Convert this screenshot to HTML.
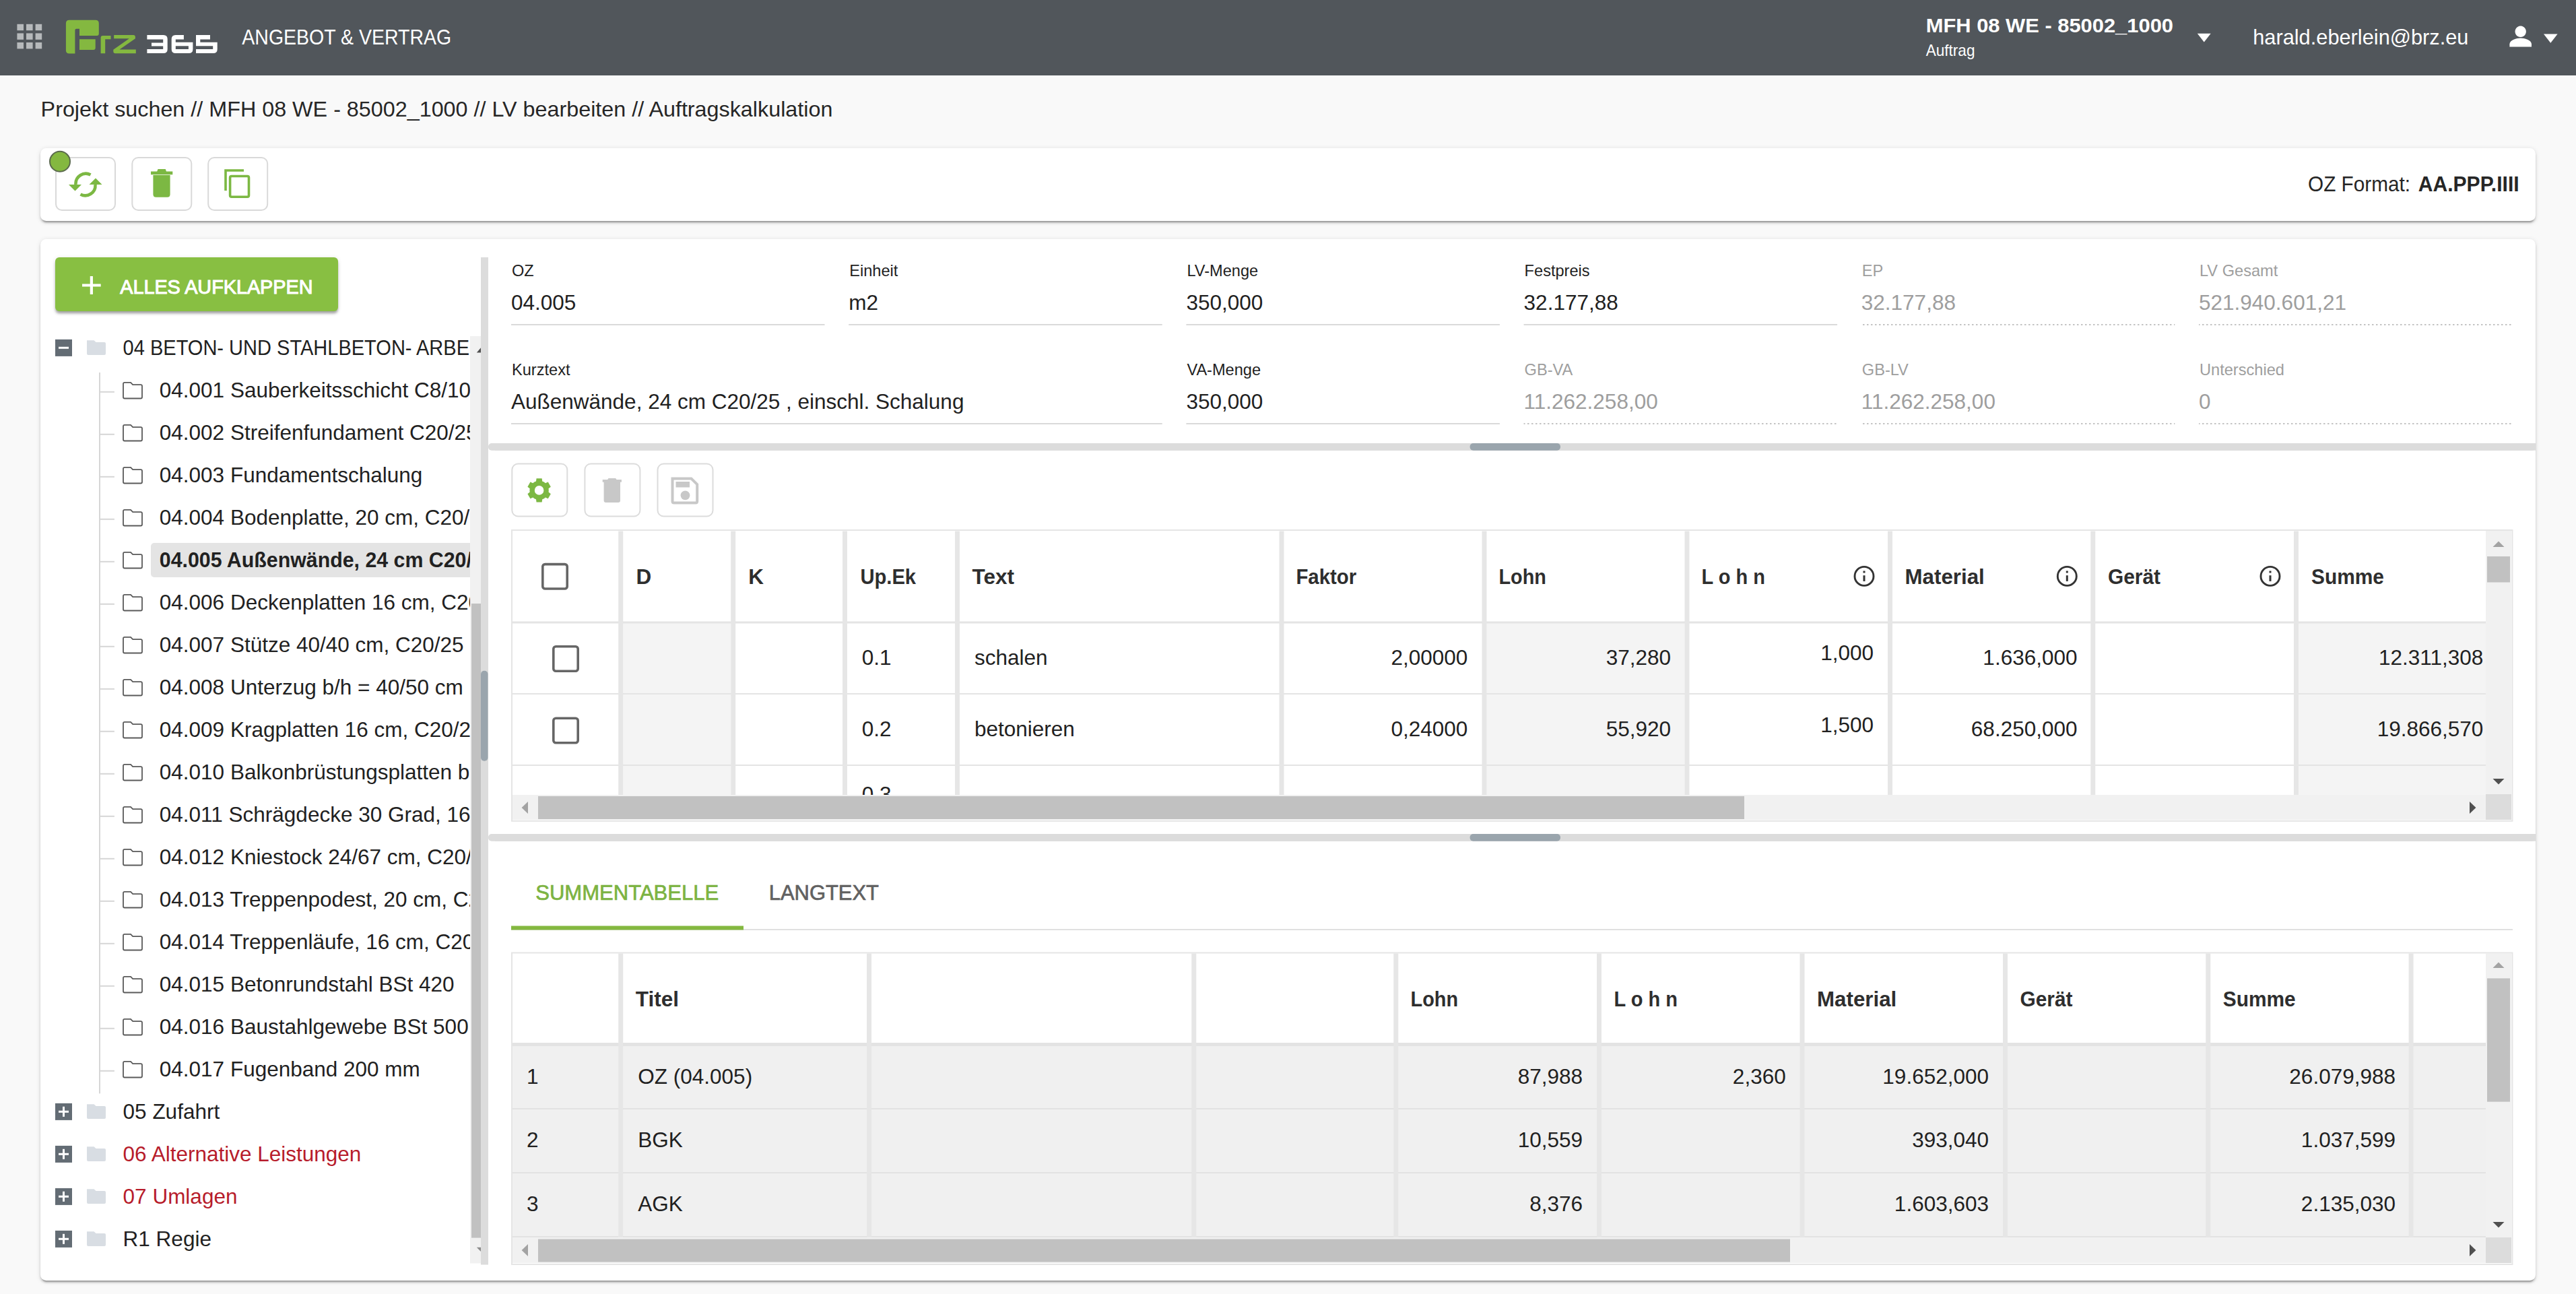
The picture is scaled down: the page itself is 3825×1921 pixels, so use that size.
<!DOCTYPE html>
<html><head><meta charset="utf-8"><title>BRZ 365 - Auftragskalkulation</title>
<style>
html,body{margin:0;padding:0;width:3825px;height:1921px;overflow:hidden;background:#f9f9f9;font-family:"Liberation Sans", sans-serif;}
svg{position:absolute;left:0;top:0;}
svg text{font-family:"Liberation Sans", sans-serif;}
</style></head><body>
<div style="position:absolute;left:0px;top:0px;width:3825px;height:113.3px;background:#fff"></div><div style="position:absolute;left:0px;top:0px;width:3825px;height:111.7px;background:#51565b"></div><div style="position:absolute;left:60px;top:220px;width:3705px;height:108px;background:#fff;border-radius:8.5px;box-shadow:0 4.5px 1.5px -3px rgba(0,0,0,.19),0 3px 3px 0 rgba(0,0,0,.16),0 1.5px 7.5px 0 rgba(0,0,0,.12)"></div><div style="position:absolute;left:60px;top:355px;width:3705px;height:1546px;background:#fff;border-radius:8.5px;box-shadow:0 4.5px 1.5px -3px rgba(0,0,0,.19),0 3px 3px 0 rgba(0,0,0,.16),0 1.5px 7.5px 0 rgba(0,0,0,.12)"></div><div style="position:absolute;left:82px;top:382px;width:420px;height:80px;background:#88bf42;border-radius:6px;box-shadow:0 4.5px 4.5px -1.5px rgba(0,0,0,.26),0 3px 3px rgba(0,0,0,.1),0 1.5px 7.5px rgba(0,0,0,.1)"></div>
<svg width="3825" height="1921" viewBox="0 0 3825 1921">
<defs>
<clipPath id="treeclip"><rect x="60" y="470" width="638" height="1420"/></clipPath>
<clipPath id="gridclip"><rect x="761" y="925" width="2930" height="255"/></clipPath>
<pattern id="dots" x="0" y="0" width="6" height="2" patternUnits="userSpaceOnUse"><rect x="0" y="0" width="2.5" height="2" fill="#c4c4c4"/></pattern>
</defs>
<rect x="25.4" y="35.8" width="9.6" height="9.4" fill="#b6b9bb" />
<rect x="25.4" y="49.4" width="9.6" height="9.4" fill="#b6b9bb" />
<rect x="25.4" y="63.0" width="9.6" height="9.4" fill="#b6b9bb" />
<rect x="39.0" y="35.8" width="9.6" height="9.4" fill="#b6b9bb" />
<rect x="39.0" y="49.4" width="9.6" height="9.4" fill="#b6b9bb" />
<rect x="39.0" y="63.0" width="9.6" height="9.4" fill="#b6b9bb" />
<rect x="52.599999999999994" y="35.8" width="9.6" height="9.4" fill="#b6b9bb" />
<rect x="52.599999999999994" y="49.4" width="9.6" height="9.4" fill="#b6b9bb" />
<rect x="52.599999999999994" y="63.0" width="9.6" height="9.4" fill="#b6b9bb" />
<path d="M102.9,29.8 H141.8 Q146.8,29.8 146.8,34.8 V50 Q146.8,53 143.8,53 H118 V42.8 H113.4 Q111.4,42.8 111.4,44.8 V79.6 H102.9 Q97.9,79.6 97.9,74.6 V34.8 Q97.9,29.8 102.9,29.8 Z" fill="#84b840" />
<path d="M118,58.2 H141.7 V71 Q141.7,74 138.7,74 H118 Z" fill="#84b840" />
<path d="M149.6,79.2 V56 Q149.6,53 152.6,53 H164.5 V58.2 H156.2 V79.2 Z" fill="#84b840" />
<path d="M169.2,52.1 H198 Q200.9,52.1 200.9,55 V57.3 L177.5,73.6 H201.8 V79.2 H171.2 Q168.3,79.2 168.3,76.3 V73.8 L191.8,57.3 H169.2 Z" fill="#84b840" />
<path d="M218.4,52 H242.7 Q248.7,52 248.7,58 V73 Q248.7,79 242.7,79 H218.4 Z" fill="#ffffff" />
<path d="M217.5,58.5 H242.2 V63.5 H225 V68.5 H242.2 V73 H217.5 Z" fill="#51565b" />
<path d="M260.7,52 H286.4 V73 Q286.4,79 280.4,79 H260.7 Q254.7,79 254.7,73 V58 Q254.7,52 260.7,52 Z" fill="#ffffff" />
<path d="M272.9,51 H287 V62.7 H260.8 V58.5 H272.9 Z" fill="#51565b" />
<rect x="260.8" y="68.3" width="19.1" height="4.7" fill="#51565b" />
<path d="M291,52 H316.7 Q322.7,52 322.7,58 V73 Q322.7,79 316.7,79 H291 Z" fill="#ffffff" />
<path d="M312,51 H323.5 V62.7 H297.3 V58.5 H312 Z" fill="#51565b" />
<rect x="291" y="68.3" width="25.2" height="4.7" fill="#51565b" />
<text x="359.3" y="65.6" font-size="32" fill="#fff" textLength="310.9" lengthAdjust="spacingAndGlyphs" >ANGEBOT &amp; VERTRAG</text>
<text x="2859.7" y="47.8" font-size="29.5" font-weight="700" fill="#fff" textLength="367.3" lengthAdjust="spacingAndGlyphs" >MFH 08 WE - 85002_1000</text>
<text x="2859.7" y="82.8" font-size="24" fill="#fff" textLength="72.8" lengthAdjust="spacingAndGlyphs" >Auftrag</text>
<path d="M3262.8,49.7 H3282.7 L3272.75,62.5 Z" fill="#fff" />
<text x="3345.2" y="65.7" font-size="31.5" fill="#fff" textLength="320.3" lengthAdjust="spacingAndGlyphs" >harald.eberlein@brz.eu</text>
<path d="M3742.7,38.6 a8.2,8.2 0 1,0 0.01,0 Z" fill="#fff" />
<path d="M3726.4,69.6 V65.5 C3726.4,59.5 3737,56.5 3742.7,56.5 C3748.4,56.5 3759,59.5 3759,65.5 V69.6 Z" fill="#fff" />
<path d="M3777,50.5 H3797.6 L3787.3,63.7 Z" fill="#fff" />
<text x="60.6" y="173" font-size="31.5" fill="#262626" textLength="1175.8" lengthAdjust="spacingAndGlyphs" >Projekt suchen // MFH 08 WE - 85002_1000 // LV bearbeiten // Auftragskalkulation</text>
<rect x="83" y="234" width="88" height="78" fill="none" rx="9" stroke="#d9d9d9" stroke-width="2"/>
<rect x="196.3" y="234" width="88" height="78" fill="none" rx="9" stroke="#d9d9d9" stroke-width="2"/>
<rect x="309.2" y="234" width="88" height="78" fill="none" rx="9" stroke="#d9d9d9" stroke-width="2"/>
<path d="M134.5,259.5 A15,15 0 0,0 112.5,274" fill="none" stroke="#7cb843" stroke-width="4.6" />
<path d="M102,274 H121 L111.5,283.5 Z" fill="#7cb843" />
<path d="M119.5,288.5 A15,15 0 0,0 141.5,274" fill="none" stroke="#7cb843" stroke-width="4.6" />
<path d="M132.5,274 H151.5 L142,264.5 Z" fill="#7cb843" />
<path d="M227.4,260 H252.6 V288.5 Q252.6,292.7 248.4,292.7 H231.6 Q227.4,292.7 227.4,288.5 Z" fill="#7cb843" />
<path d="M224,254.5 H256.3 V259.2 H224 Z M234.5,251 H245.7 L247,254.5 H233.2 Z" fill="#7cb843" />
<path d="M335,283 V253 H362" fill="none" stroke="#7cb843" stroke-width="3.6" />
<path d="M343.8,261.5 H367.3 Q369.5,261.5 369.5,263.7 V290 Q369.5,292.2 367.3,292.2 H343.8 Q341.6,292.2 341.6,290 V263.7 Q341.6,261.5 343.8,261.5 Z" fill="none" stroke="#7cb843" stroke-width="3.6" />
<circle cx="89" cy="239.8" r="15" fill="#84b840" stroke="#5b6b4d" stroke-width="2"/>
<text x="3427" y="283.8" font-size="32" fill="#262626" textLength="152" lengthAdjust="spacingAndGlyphs" >OZ Format:</text>
<text x="3740.6" y="283.8" font-size="32" font-weight="700" fill="#262626" text-anchor="end" textLength="149.8" lengthAdjust="spacingAndGlyphs" >AA.PPP.IIII</text>
<path d="M122,423.5 H149.7 M135.85,410 V437" fill="none" stroke="#fff" stroke-width="4.2" />
<text x="178.2" y="436" font-size="29.5" fill="#fff" textLength="286.3" lengthAdjust="spacingAndGlyphs" stroke="#fff" stroke-width="1.1">ALLES AUFKLAPPEN</text>
<rect x="224" y="806" width="490" height="51" fill="#e4e4e4" rx="5" clip-path="url(#treeclip)"/>
<rect x="147" y="553" width="2" height="1070.4" fill="#d6d6d6" />
<rect x="82" y="503.9" width="25" height="25" fill="#636c74" />
<rect x="87" y="514.8" width="15" height="3" fill="#fff" />
<path d="M129,505.29999999999995 H139.5 L142.5,508.09999999999997 H155 Q157,508.09999999999997 157,510.09999999999997 V525.0 Q157,527.0 155,527.0 H131 Q129,527.0 129,525.0 Z" fill="#d8dde3" />
<text x="182.6" y="527.3" font-size="31.5" fill="#212121" textLength="580.5" lengthAdjust="spacingAndGlyphs" clip-path="url(#treeclip)">04 BETON- UND STAHLBETON- ARBEITEN</text>
<rect x="149" y="580.8" width="20.9" height="2" fill="#d6d6d6" />
<path d="M183,569.8 Q183,567.8 185,567.8 H194 L197.2,571.0999999999999 H209 Q211,571.0999999999999 211,573.0999999999999 V589.5 Q211,591.5 209,591.5 H185 Q183,591.5 183,589.5 Z" fill="none" stroke="#5a5a5a" stroke-width="1.8" />
<text x="236.8" y="590.3" font-size="31.5" fill="#212121" clip-path="url(#treeclip)">04.001 Sauberkeitsschicht C8/10, 5 cm</text>
<rect x="149" y="643.8" width="20.9" height="2" fill="#d6d6d6" />
<path d="M183,632.8 Q183,630.8 185,630.8 H194 L197.2,634.0999999999999 H209 Q211,634.0999999999999 211,636.0999999999999 V652.5 Q211,654.5 209,654.5 H185 Q183,654.5 183,652.5 Z" fill="none" stroke="#5a5a5a" stroke-width="1.8" />
<text x="236.8" y="653.3" font-size="31.5" fill="#212121" clip-path="url(#treeclip)">04.002 Streifenfundament C20/25</text>
<rect x="149" y="706.8" width="20.9" height="2" fill="#d6d6d6" />
<path d="M183,695.8 Q183,693.8 185,693.8 H194 L197.2,697.0999999999999 H209 Q211,697.0999999999999 211,699.0999999999999 V715.5 Q211,717.5 209,717.5 H185 Q183,717.5 183,715.5 Z" fill="none" stroke="#5a5a5a" stroke-width="1.8" />
<text x="236.8" y="716.3" font-size="31.5" fill="#212121" clip-path="url(#treeclip)">04.003 Fundamentschalung</text>
<rect x="149" y="769.8" width="20.9" height="2" fill="#d6d6d6" />
<path d="M183,758.8 Q183,756.8 185,756.8 H194 L197.2,760.0999999999999 H209 Q211,760.0999999999999 211,762.0999999999999 V778.5 Q211,780.5 209,780.5 H185 Q183,780.5 183,778.5 Z" fill="none" stroke="#5a5a5a" stroke-width="1.8" />
<text x="236.8" y="779.3" font-size="31.5" fill="#212121" clip-path="url(#treeclip)">04.004 Bodenplatte, 20 cm, C20/25</text>
<rect x="149" y="832.8" width="20.9" height="2" fill="#d6d6d6" />
<path d="M183,821.8 Q183,819.8 185,819.8 H194 L197.2,823.0999999999999 H209 Q211,823.0999999999999 211,825.0999999999999 V841.5 Q211,843.5 209,843.5 H185 Q183,843.5 183,841.5 Z" fill="none" stroke="#5a5a5a" stroke-width="1.8" />
<text x="236.8" y="842.3" font-size="31.5" font-weight="700" fill="#212121" textLength="780.9" lengthAdjust="spacingAndGlyphs" clip-path="url(#treeclip)">04.005 Außenwände, 24 cm C20/25 , einschl. Schalung</text>
<rect x="149" y="895.8" width="20.9" height="2" fill="#d6d6d6" />
<path d="M183,884.8 Q183,882.8 185,882.8 H194 L197.2,886.0999999999999 H209 Q211,886.0999999999999 211,888.0999999999999 V904.5 Q211,906.5 209,906.5 H185 Q183,906.5 183,904.5 Z" fill="none" stroke="#5a5a5a" stroke-width="1.8" />
<text x="236.8" y="905.3" font-size="31.5" fill="#212121" clip-path="url(#treeclip)">04.006 Deckenplatten 16 cm, C20/25</text>
<rect x="149" y="958.8" width="20.9" height="2" fill="#d6d6d6" />
<path d="M183,947.8 Q183,945.8 185,945.8 H194 L197.2,949.0999999999999 H209 Q211,949.0999999999999 211,951.0999999999999 V967.5 Q211,969.5 209,969.5 H185 Q183,969.5 183,967.5 Z" fill="none" stroke="#5a5a5a" stroke-width="1.8" />
<text x="236.8" y="968.3" font-size="31.5" fill="#212121" clip-path="url(#treeclip)">04.007 Stütze 40/40 cm, C20/25</text>
<rect x="149" y="1021.8" width="20.9" height="2" fill="#d6d6d6" />
<path d="M183,1010.8 Q183,1008.8 185,1008.8 H194 L197.2,1012.0999999999999 H209 Q211,1012.0999999999999 211,1014.0999999999999 V1030.5 Q211,1032.5 209,1032.5 H185 Q183,1032.5 183,1030.5 Z" fill="none" stroke="#5a5a5a" stroke-width="1.8" />
<text x="236.8" y="1031.3" font-size="31.5" fill="#212121" clip-path="url(#treeclip)">04.008 Unterzug b/h = 40/50 cm</text>
<rect x="149" y="1084.8" width="20.9" height="2" fill="#d6d6d6" />
<path d="M183,1073.8 Q183,1071.8 185,1071.8 H194 L197.2,1075.1 H209 Q211,1075.1 211,1077.1 V1093.5 Q211,1095.5 209,1095.5 H185 Q183,1095.5 183,1093.5 Z" fill="none" stroke="#5a5a5a" stroke-width="1.8" />
<text x="236.8" y="1094.3" font-size="31.5" fill="#212121" clip-path="url(#treeclip)">04.009 Kragplatten 16 cm, C20/25</text>
<rect x="149" y="1147.8" width="20.9" height="2" fill="#d6d6d6" />
<path d="M183,1136.8 Q183,1134.8 185,1134.8 H194 L197.2,1138.1 H209 Q211,1138.1 211,1140.1 V1156.5 Q211,1158.5 209,1158.5 H185 Q183,1158.5 183,1156.5 Z" fill="none" stroke="#5a5a5a" stroke-width="1.8" />
<text x="236.8" y="1157.3" font-size="31.5" fill="#212121" clip-path="url(#treeclip)">04.010 Balkonbrüstungsplatten b = 1,00 m</text>
<rect x="149" y="1210.8" width="20.9" height="2" fill="#d6d6d6" />
<path d="M183,1199.8 Q183,1197.8 185,1197.8 H194 L197.2,1201.1 H209 Q211,1201.1 211,1203.1 V1219.5 Q211,1221.5 209,1221.5 H185 Q183,1221.5 183,1219.5 Z" fill="none" stroke="#5a5a5a" stroke-width="1.8" />
<text x="236.8" y="1220.3" font-size="31.5" fill="#212121" clip-path="url(#treeclip)">04.011 Schrägdecke 30 Grad, 16 cm</text>
<rect x="149" y="1273.8" width="20.9" height="2" fill="#d6d6d6" />
<path d="M183,1262.8 Q183,1260.8 185,1260.8 H194 L197.2,1264.1 H209 Q211,1264.1 211,1266.1 V1282.5 Q211,1284.5 209,1284.5 H185 Q183,1284.5 183,1282.5 Z" fill="none" stroke="#5a5a5a" stroke-width="1.8" />
<text x="236.8" y="1283.3" font-size="31.5" fill="#212121" clip-path="url(#treeclip)">04.012 Kniestock 24/67 cm, C20/25</text>
<rect x="149" y="1336.8" width="20.9" height="2" fill="#d6d6d6" />
<path d="M183,1325.8 Q183,1323.8 185,1323.8 H194 L197.2,1327.1 H209 Q211,1327.1 211,1329.1 V1345.5 Q211,1347.5 209,1347.5 H185 Q183,1347.5 183,1345.5 Z" fill="none" stroke="#5a5a5a" stroke-width="1.8" />
<text x="236.8" y="1346.3" font-size="31.5" fill="#212121" clip-path="url(#treeclip)">04.013 Treppenpodest, 20 cm, C20/25</text>
<rect x="149" y="1399.8" width="20.9" height="2" fill="#d6d6d6" />
<path d="M183,1388.8 Q183,1386.8 185,1386.8 H194 L197.2,1390.1 H209 Q211,1390.1 211,1392.1 V1408.5 Q211,1410.5 209,1410.5 H185 Q183,1410.5 183,1408.5 Z" fill="none" stroke="#5a5a5a" stroke-width="1.8" />
<text x="236.8" y="1409.3" font-size="31.5" fill="#212121" clip-path="url(#treeclip)">04.014 Treppenläufe, 16 cm, C20/25</text>
<rect x="149" y="1462.8" width="20.9" height="2" fill="#d6d6d6" />
<path d="M183,1451.8 Q183,1449.8 185,1449.8 H194 L197.2,1453.1 H209 Q211,1453.1 211,1455.1 V1471.5 Q211,1473.5 209,1473.5 H185 Q183,1473.5 183,1471.5 Z" fill="none" stroke="#5a5a5a" stroke-width="1.8" />
<text x="236.8" y="1472.3" font-size="31.5" fill="#212121" clip-path="url(#treeclip)">04.015 Betonrundstahl BSt 420</text>
<rect x="149" y="1525.8" width="20.9" height="2" fill="#d6d6d6" />
<path d="M183,1514.8 Q183,1512.8 185,1512.8 H194 L197.2,1516.1 H209 Q211,1516.1 211,1518.1 V1534.5 Q211,1536.5 209,1536.5 H185 Q183,1536.5 183,1534.5 Z" fill="none" stroke="#5a5a5a" stroke-width="1.8" />
<text x="236.8" y="1535.3" font-size="31.5" fill="#212121" clip-path="url(#treeclip)">04.016 Baustahlgewebe BSt 500</text>
<rect x="149" y="1588.8" width="20.9" height="2" fill="#d6d6d6" />
<path d="M183,1577.8 Q183,1575.8 185,1575.8 H194 L197.2,1579.1 H209 Q211,1579.1 211,1581.1 V1597.5 Q211,1599.5 209,1599.5 H185 Q183,1599.5 183,1597.5 Z" fill="none" stroke="#5a5a5a" stroke-width="1.8" />
<text x="236.8" y="1598.3" font-size="31.5" fill="#212121" clip-path="url(#treeclip)">04.017 Fugenband 200 mm</text>
<rect x="82" y="1637.8999999999999" width="25" height="25" fill="#636c74" />
<rect x="87" y="1648.8" width="15" height="3" fill="#fff" />
<rect x="93" y="1642.8" width="3" height="15" fill="#fff" />
<path d="M129,1639.3 H139.5 L142.5,1642.1 H155 Q157,1642.1 157,1644.1 V1659.0 Q157,1661.0 155,1661.0 H131 Q129,1661.0 129,1659.0 Z" fill="#d8dde3" />
<text x="182.6" y="1661.3" font-size="31.5" fill="#212121" clip-path="url(#treeclip)">05 Zufahrt</text>
<rect x="82" y="1700.8999999999999" width="25" height="25" fill="#636c74" />
<rect x="87" y="1711.8" width="15" height="3" fill="#fff" />
<rect x="93" y="1705.8" width="3" height="15" fill="#fff" />
<path d="M129,1702.3 H139.5 L142.5,1705.1 H155 Q157,1705.1 157,1707.1 V1722.0 Q157,1724.0 155,1724.0 H131 Q129,1724.0 129,1722.0 Z" fill="#d8dde3" />
<text x="182.6" y="1724.3" font-size="31.5" fill="#b71c2b" clip-path="url(#treeclip)">06 Alternative Leistungen</text>
<rect x="82" y="1763.8999999999999" width="25" height="25" fill="#636c74" />
<rect x="87" y="1774.8" width="15" height="3" fill="#fff" />
<rect x="93" y="1768.8" width="3" height="15" fill="#fff" />
<path d="M129,1765.3 H139.5 L142.5,1768.1 H155 Q157,1768.1 157,1770.1 V1785.0 Q157,1787.0 155,1787.0 H131 Q129,1787.0 129,1785.0 Z" fill="#d8dde3" />
<text x="182.6" y="1787.3" font-size="31.5" fill="#b71c2b" clip-path="url(#treeclip)">07 Umlagen</text>
<rect x="82" y="1826.8999999999999" width="25" height="25" fill="#636c74" />
<rect x="87" y="1837.8" width="15" height="3" fill="#fff" />
<rect x="93" y="1831.8" width="3" height="15" fill="#fff" />
<path d="M129,1828.3 H139.5 L142.5,1831.1 H155 Q157,1831.1 157,1833.1 V1848.0 Q157,1850.0 155,1850.0 H131 Q129,1850.0 129,1848.0 Z" fill="#d8dde3" />
<text x="182.6" y="1850.3" font-size="31.5" fill="#212121" clip-path="url(#treeclip)">R1 Regie</text>
<rect x="698" y="499" width="16" height="1376.5" fill="#f1f1f1" />
<rect x="700" y="896" width="14" height="941.6" fill="#c1c1c1" />
<path d="M707.8,523.4 L714,516.3 V523.4 Z" fill="#505050" />
<path d="M707.8,1851.7 H714 V1858 Z" fill="#8c8c8c" />
<rect x="714" y="382" width="11" height="1495.5" fill="#dcdcdc" />
<rect x="714" y="995.7" width="10.5" height="134" fill="#9aa5ad" rx="5" />
<text x="760.0" y="410" font-size="23.6" fill="#1f1f1f" >OZ</text>
<text x="759.0" y="460" font-size="31.5" fill="#212121" >04.005</text>
<rect x="759.0" y="481" width="465.5" height="2" fill="#dadada" />
<text x="1261.2" y="410" font-size="23.6" fill="#1f1f1f" >Einheit</text>
<text x="1260.2" y="460" font-size="31.5" fill="#212121" >m2</text>
<rect x="1260.2" y="481" width="465.5" height="2" fill="#dadada" />
<text x="1762.4" y="410" font-size="23.6" fill="#1f1f1f" >LV-Menge</text>
<text x="1761.4" y="460" font-size="31.5" fill="#212121" >350,000</text>
<rect x="1761.4" y="481" width="465.5" height="2" fill="#dadada" />
<text x="2263.6" y="410" font-size="23.6" fill="#1f1f1f" >Festpreis</text>
<text x="2262.6" y="460" font-size="31.5" fill="#212121" >32.177,88</text>
<rect x="2262.6" y="481" width="465.5" height="2" fill="#dadada" />
<text x="2764.8" y="410" font-size="23.6" fill="#9e9e9e" >EP</text>
<text x="2763.8" y="460" font-size="31.5" fill="#9e9e9e" >32.177,88</text>
<rect x="2763.8" y="481" width="465.5" height="2" fill="url(#dots)" />
<text x="3266.0" y="410" font-size="23.6" fill="#9e9e9e" >LV Gesamt</text>
<text x="3265.0" y="460" font-size="31.5" fill="#9e9e9e" >521.940.601,21</text>
<rect x="3265.0" y="481" width="465.5" height="2" fill="url(#dots)" />
<text x="760.0" y="557" font-size="23.6" fill="#1f1f1f" >Kurztext</text>
<text x="759.0" y="607" font-size="31.5" fill="#212121" >Außenwände, 24 cm C20/25 , einschl. Schalung</text>
<rect x="759.0" y="628" width="966.7" height="2" fill="#dadada" />
<text x="1762.4" y="557" font-size="23.6" fill="#1f1f1f" >VA-Menge</text>
<text x="1761.4" y="607" font-size="31.5" fill="#212121" >350,000</text>
<rect x="1761.4" y="628" width="465.5" height="2" fill="#dadada" />
<text x="2263.6" y="557" font-size="23.6" fill="#9e9e9e" >GB-VA</text>
<text x="2262.6" y="607" font-size="31.5" fill="#9e9e9e" >11.262.258,00</text>
<rect x="2262.6" y="628" width="465.5" height="2" fill="url(#dots)" />
<text x="2764.8" y="557" font-size="23.6" fill="#9e9e9e" >GB-LV</text>
<text x="2763.8" y="607" font-size="31.5" fill="#9e9e9e" >11.262.258,00</text>
<rect x="2763.8" y="628" width="465.5" height="2" fill="url(#dots)" />
<text x="3266.0" y="557" font-size="23.6" fill="#9e9e9e" >Unterschied</text>
<text x="3265.0" y="607" font-size="31.5" fill="#9e9e9e" >0</text>
<rect x="3265.0" y="628" width="465.5" height="2" fill="url(#dots)" />
<rect x="725" y="658" width="3040" height="10.7" fill="#dcdcdc" rx="5" />
<rect x="735" y="658" width="3030" height="10.7" fill="#dcdcdc" />
<rect x="2182.6" y="658" width="134.4" height="10.7" fill="#9aa5ad" rx="5" />
<rect x="760.3" y="688.5" width="82" height="78" fill="none" rx="9" stroke="#dcdcdc" stroke-width="2"/>
<rect x="868.4" y="688.5" width="82" height="78" fill="none" rx="9" stroke="#dcdcdc" stroke-width="2"/>
<rect x="976.5" y="688.5" width="82" height="78" fill="none" rx="9" stroke="#dcdcdc" stroke-width="2"/>
<path d="M793.50,715.60 L795.98,714.47 L796.55,710.36 L804.65,710.36 L805.22,714.47 L807.70,715.60 L809.92,717.18 L813.76,715.62 L817.81,722.64 L814.54,725.19 L814.80,727.90 L814.54,730.61 L817.81,733.16 L813.76,740.18 L809.92,738.62 L807.70,740.20 L805.22,741.33 L804.65,745.44 L796.55,745.44 L795.98,741.33 L793.50,740.20 L791.28,738.62 L787.44,740.18 L783.39,733.16 L786.66,730.61 L786.40,727.90 L786.66,725.19 L783.39,722.64 L787.44,715.62 L791.28,717.18 Z M807.4,727.9 A6.8,6.8 0 1,0 793.8000000000001,727.9 A6.8,6.8 0 1,0 807.4,727.9 Z" fill="#7cb843" fill-rule="evenodd"/>
<path d="M896.6,715 H921 V743 Q921,746 918,746 H899.6 Q896.6,746 896.6,743 Z" fill="#c8c8c8" />
<path d="M894.7,712 H922.9 V715.7 H894.7 Z M903.5,710 H914.2 L915.5,712 H902.2 Z" fill="#c8c8c8" />
<path d="M998.5,710.5 H1026.5 L1035.2,719 V744.3 Q1035.2,746.5 1033,746.5 H1000.7 Q998.5,746.5 998.5,744.3 Z" fill="none" stroke="#c8c8c8" stroke-width="4" />
<rect x="1003.5" y="715" width="20.5" height="8.5" fill="#c8c8c8" />
<circle cx="1017.5" cy="735.3" r="6.9" fill="#c8c8c8"/>
<rect x="760" y="787" width="2970.5" height="431.8" fill="none" stroke="#e5e5e5" stroke-width="2"/>
<rect x="925.2" y="925" width="160.0" height="255" fill="#f4f4f4" />
<rect x="2207.5" y="925" width="294.0" height="255" fill="#f4f4f4" />
<rect x="3413" y="925" width="278" height="255" fill="#f4f4f4" />
<rect x="761" y="922.5" width="2930" height="3" fill="#e4e4e4" />
<rect x="761" y="1029" width="2930" height="2" fill="#e4e4e4" />
<rect x="761" y="1135" width="2930" height="2" fill="#e4e4e4" />
<rect x="918.2" y="788.5" width="7" height="391.5" fill="#e6e6e6" />
<rect x="1085.2" y="788.5" width="7" height="391.5" fill="#e6e6e6" />
<rect x="1251" y="788.5" width="7" height="391.5" fill="#e6e6e6" />
<rect x="1418" y="788.5" width="7" height="391.5" fill="#e6e6e6" />
<rect x="1899.5" y="788.5" width="7" height="391.5" fill="#e6e6e6" />
<rect x="2200.5" y="788.5" width="7" height="391.5" fill="#e6e6e6" />
<rect x="2501.5" y="788.5" width="7" height="391.5" fill="#e6e6e6" />
<rect x="2803" y="788.5" width="7" height="391.5" fill="#e6e6e6" />
<rect x="3104.3" y="788.5" width="7" height="391.5" fill="#e6e6e6" />
<rect x="3406" y="788.5" width="7" height="391.5" fill="#e6e6e6" />
<rect x="805.8" y="837.6" width="36.4" height="36.4" fill="none" rx="3.5" stroke="#666" stroke-width="3.6"/>
<rect x="821.8" y="959.8" width="36.4" height="36.4" fill="none" rx="3.5" stroke="#666" stroke-width="3.6"/>
<rect x="821.8" y="1066.3" width="36.4" height="36.4" fill="none" rx="3.5" stroke="#666" stroke-width="3.6"/>
<text x="944.4" y="867" font-size="31.5" font-weight="700" fill="#2e2e2e" >D</text>
<text x="1111.2" y="867" font-size="31.5" font-weight="700" fill="#2e2e2e" >K</text>
<text x="1277.4" y="867" font-size="31.5" font-weight="700" fill="#2e2e2e" textLength="82.7" lengthAdjust="spacingAndGlyphs" >Up.Ek</text>
<text x="1443.5" y="867" font-size="31.5" font-weight="700" fill="#2e2e2e" >Text</text>
<text x="1924.4" y="867" font-size="31.5" font-weight="700" fill="#2e2e2e" textLength="89.8" lengthAdjust="spacingAndGlyphs" >Faktor</text>
<text x="2225.5" y="867" font-size="31.5" font-weight="700" fill="#2e2e2e" textLength="70.5" lengthAdjust="spacingAndGlyphs" >Lohn</text>
<text x="2526.5" y="867" font-size="31.5" font-weight="700" fill="#2e2e2e" textLength="94.5" lengthAdjust="spacingAndGlyphs" >L o h n</text>
<text x="2828.5" y="867" font-size="31.5" font-weight="700" fill="#2e2e2e" textLength="118.3" lengthAdjust="spacingAndGlyphs" >Material</text>
<text x="3130" y="867" font-size="31.5" font-weight="700" fill="#2e2e2e" textLength="78" lengthAdjust="spacingAndGlyphs" >Gerät</text>
<text x="3432" y="867" font-size="31.5" font-weight="700" fill="#2e2e2e" textLength="108" lengthAdjust="spacingAndGlyphs" >Summe</text>
<circle cx="2768" cy="855.4" r="14" fill="none" stroke="#333" stroke-width="2.9"/>
<rect x="2766.5" y="854.1999999999999" width="3" height="8.7" fill="#333" />
<rect x="2766.5" y="847.5" width="3" height="3" fill="#333" />
<circle cx="3069.3" cy="855.4" r="14" fill="none" stroke="#333" stroke-width="2.9"/>
<rect x="3067.8" y="854.1999999999999" width="3" height="8.7" fill="#333" />
<rect x="3067.8" y="847.5" width="3" height="3" fill="#333" />
<circle cx="3371" cy="855.4" r="14" fill="none" stroke="#333" stroke-width="2.9"/>
<rect x="3369.5" y="854.1999999999999" width="3" height="8.7" fill="#333" />
<rect x="3369.5" y="847.5" width="3" height="3" fill="#333" />
<text x="1279.8" y="986.5" font-size="31.5" fill="#212121" clip-path="url(#gridclip)">0.1</text>
<text x="1447" y="986.5" font-size="31.5" fill="#212121" clip-path="url(#gridclip)">schalen</text>
<text x="2179.3" y="986.5" font-size="31.5" fill="#212121" text-anchor="end" clip-path="url(#gridclip)">2,00000</text>
<text x="2481" y="986.5" font-size="31.5" fill="#212121" text-anchor="end" clip-path="url(#gridclip)">37,280</text>
<text x="2782" y="980.0" font-size="31.5" fill="#212121" text-anchor="end" clip-path="url(#gridclip)">1,000</text>
<text x="3084.5" y="986.5" font-size="31.5" fill="#212121" text-anchor="end" clip-path="url(#gridclip)">1.636,000</text>
<text x="3687.4" y="986.5" font-size="31.5" fill="#212121" text-anchor="end" clip-path="url(#gridclip)">12.311,308</text>
<text x="1279.8" y="1093" font-size="31.5" fill="#212121" clip-path="url(#gridclip)">0.2</text>
<text x="1447" y="1093" font-size="31.5" fill="#212121" clip-path="url(#gridclip)">betonieren</text>
<text x="2179.3" y="1093" font-size="31.5" fill="#212121" text-anchor="end" clip-path="url(#gridclip)">0,24000</text>
<text x="2481" y="1093" font-size="31.5" fill="#212121" text-anchor="end" clip-path="url(#gridclip)">55,920</text>
<text x="2782" y="1086.5" font-size="31.5" fill="#212121" text-anchor="end" clip-path="url(#gridclip)">1,500</text>
<text x="3084.5" y="1093" font-size="31.5" fill="#212121" text-anchor="end" clip-path="url(#gridclip)">68.250,000</text>
<text x="3687.4" y="1093" font-size="31.5" fill="#212121" text-anchor="end" clip-path="url(#gridclip)">19.866,570</text>
<text x="1279.8" y="1190" font-size="31.5" fill="#212121" clip-path="url(#gridclip)">0.3</text>
<rect x="3691" y="788" width="38" height="392" fill="#f1f1f1" />
<rect x="3693" y="826" width="34" height="38.5" fill="#c1c1c1" />
<path d="M3701.5,812 H3718.5 L3710,803.5 Z" fill="#a3a3a3" />
<path d="M3701.5,1156 H3718.5 L3710,1164.5 Z" fill="#505050" />
<rect x="761" y="1180" width="2930" height="37" fill="#f1f1f1" />
<rect x="799" y="1182" width="1791" height="34" fill="#c1c1c1" />
<path d="M784,1190 V1208 L774.6,1199 Z" fill="#a3a3a3" />
<path d="M3667,1190 V1208 L3676.4,1199 Z" fill="#505050" />
<rect x="3691" y="1179" width="38" height="38" fill="#dcdcdc" />
<rect x="725" y="1238" width="3040" height="10.7" fill="#dcdcdc" rx="5" />
<rect x="735" y="1238" width="3030" height="10.7" fill="#dcdcdc" />
<rect x="2182.6" y="1238" width="134.4" height="10.7" fill="#9aa5ad" rx="5" />
<text x="795.2" y="1335.6" font-size="31.5" fill="#7cb342" textLength="272.1" lengthAdjust="spacingAndGlyphs" stroke="#7cb342" stroke-width="0.7">SUMMENTABELLE</text>
<text x="1141.8" y="1335.6" font-size="31.5" fill="#616161" textLength="163.1" lengthAdjust="spacingAndGlyphs" stroke="#616161" stroke-width="0.7">LANGTEXT</text>
<rect x="759" y="1379" width="2972" height="2" fill="#e0e0e0" />
<rect x="759" y="1374.5" width="345" height="6" fill="#84b840" />
<rect x="760" y="1414.5" width="2970.5" height="462.5" fill="none" stroke="#e5e5e5" stroke-width="2"/>
<rect x="761" y="1553" width="2930" height="284" fill="#f0f0f0" />
<rect x="761" y="1548" width="2930" height="5" fill="#e3e3e3" />
<rect x="761" y="1645" width="2930" height="2" fill="#e2e2e2" />
<rect x="761" y="1740" width="2930" height="2" fill="#e2e2e2" />
<rect x="761" y="1835" width="2930" height="2" fill="#e2e2e2" />
<rect x="918.2" y="1415.5" width="7" height="421.5" fill="#e6e6e6" />
<rect x="1287" y="1415.5" width="7" height="421.5" fill="#e6e6e6" />
<rect x="1769.3" y="1415.5" width="7" height="421.5" fill="#e6e6e6" />
<rect x="2069.3" y="1415.5" width="7" height="421.5" fill="#e6e6e6" />
<rect x="2371" y="1415.5" width="7" height="421.5" fill="#e6e6e6" />
<rect x="2672.5" y="1415.5" width="7" height="421.5" fill="#e6e6e6" />
<rect x="2974" y="1415.5" width="7" height="421.5" fill="#e6e6e6" />
<rect x="3275.3" y="1415.5" width="7" height="421.5" fill="#e6e6e6" />
<rect x="3576.6" y="1415.5" width="7" height="421.5" fill="#e6e6e6" />
<text x="943.8" y="1493.5" font-size="31.5" font-weight="700" fill="#2e2e2e" >Titel</text>
<text x="2094.6" y="1493.5" font-size="31.5" font-weight="700" fill="#2e2e2e" textLength="70.5" lengthAdjust="spacingAndGlyphs" >Lohn</text>
<text x="2396.5" y="1493.5" font-size="31.5" font-weight="700" fill="#2e2e2e" textLength="94.5" lengthAdjust="spacingAndGlyphs" >L o h n</text>
<text x="2698" y="1493.5" font-size="31.5" font-weight="700" fill="#2e2e2e" textLength="118.3" lengthAdjust="spacingAndGlyphs" >Material</text>
<text x="2999.5" y="1493.5" font-size="31.5" font-weight="700" fill="#2e2e2e" textLength="78" lengthAdjust="spacingAndGlyphs" >Gerät</text>
<text x="3300.7" y="1493.5" font-size="31.5" font-weight="700" fill="#2e2e2e" textLength="108" lengthAdjust="spacingAndGlyphs" >Summe</text>
<text x="782" y="1608.5" font-size="31.5" fill="#212121" >1</text>
<text x="947.3" y="1608.5" font-size="31.5" fill="#212121" >OZ (04.005)</text>
<text x="2350" y="1608.5" font-size="31.5" fill="#212121" text-anchor="end" >87,988</text>
<text x="2651.7" y="1608.5" font-size="31.5" fill="#212121" text-anchor="end" >2,360</text>
<text x="2953" y="1608.5" font-size="31.5" fill="#212121" text-anchor="end" >19.652,000</text>
<text x="3557" y="1608.5" font-size="31.5" fill="#212121" text-anchor="end" >26.079,988</text>
<text x="782" y="1703.0" font-size="31.5" fill="#212121" >2</text>
<text x="947.3" y="1703.0" font-size="31.5" fill="#212121" >BGK</text>
<text x="2350" y="1703.0" font-size="31.5" fill="#212121" text-anchor="end" >10,559</text>
<text x="2953" y="1703.0" font-size="31.5" fill="#212121" text-anchor="end" >393,040</text>
<text x="3557" y="1703.0" font-size="31.5" fill="#212121" text-anchor="end" >1.037,599</text>
<text x="782" y="1797.5" font-size="31.5" fill="#212121" >3</text>
<text x="947.3" y="1797.5" font-size="31.5" fill="#212121" >AGK</text>
<text x="2350" y="1797.5" font-size="31.5" fill="#212121" text-anchor="end" >8,376</text>
<text x="2953" y="1797.5" font-size="31.5" fill="#212121" text-anchor="end" >1.603,603</text>
<text x="3557" y="1797.5" font-size="31.5" fill="#212121" text-anchor="end" >2.135,030</text>
<rect x="3691" y="1415" width="38" height="422" fill="#f1f1f1" />
<rect x="3693" y="1452.4" width="34" height="183.2" fill="#c1c1c1" />
<path d="M3701.5,1437 H3718.5 L3710,1428.5 Z" fill="#a3a3a3" />
<path d="M3701.5,1814 H3718.5 L3710,1822.5 Z" fill="#505050" />
<rect x="761" y="1837" width="2930" height="38" fill="#f1f1f1" />
<rect x="799" y="1839.5" width="1859" height="34" fill="#c1c1c1" />
<path d="M784,1847 V1865 L774.6,1856 Z" fill="#a3a3a3" />
<path d="M3667,1847 V1865 L3676.4,1856 Z" fill="#505050" />
<rect x="3691" y="1837" width="38" height="38" fill="#dcdcdc" />
</svg>
</body></html>
